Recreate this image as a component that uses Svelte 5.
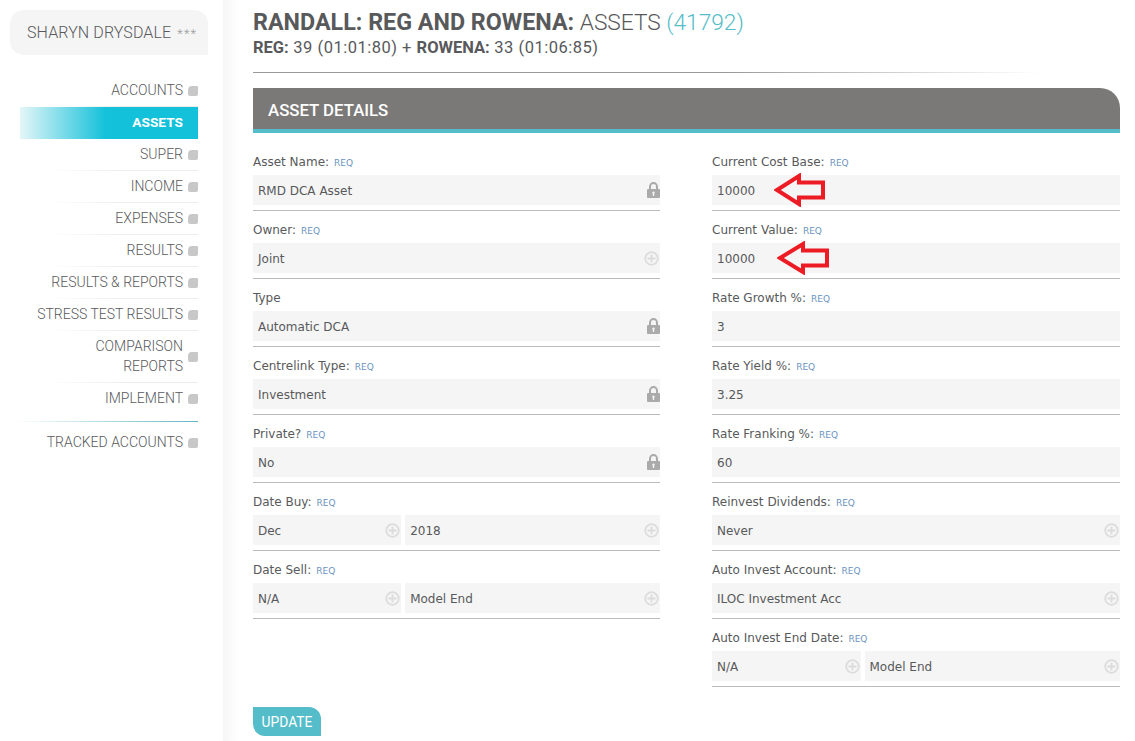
<script>
	const nav = [
		{ label: 'ACCOUNTS' },
		{ label: 'ASSETS', active: true },
		{ label: 'SUPER' },
		{ label: 'INCOME' },
		{ label: 'EXPENSES' },
		{ label: 'RESULTS' },
		{ label: 'RESULTS & REPORTS' },
		{ label: 'STRESS TEST RESULTS' },
		{ label: 'COMPARISON REPORTS', wrap: true },
		{ label: 'IMPLEMENT', last: true }
	];

	const left = [
		{ label: 'Asset Name:', req: true, parts: [{ value: 'RMD DCA Asset', icon: 'lock' }] },
		{ label: 'Owner:', req: true, parts: [{ value: 'Joint', icon: 'plus' }] },
		{ label: 'Type', parts: [{ value: 'Automatic DCA', icon: 'lock' }] },
		{ label: 'Centrelink Type:', req: true, parts: [{ value: 'Investment', icon: 'lock' }] },
		{ label: 'Private?', req: true, parts: [{ value: 'No', icon: 'lock' }] },
		{ label: 'Date Buy:', req: true, parts: [{ value: 'Dec', icon: 'plus' }, { value: '2018', icon: 'plus' }] },
		{ label: 'Date Sell:', req: true, parts: [{ value: 'N/A', icon: 'plus' }, { value: 'Model End', icon: 'plus' }] }
	];

	const right = [
		{ label: 'Current Cost Base:', req: true, parts: [{ value: '10000' }] },
		{ label: 'Current Value:', req: true, parts: [{ value: '10000' }] },
		{ label: 'Rate Growth %:', req: true, parts: [{ value: '3' }] },
		{ label: 'Rate Yield %:', req: true, parts: [{ value: '3.25' }] },
		{ label: 'Rate Franking %:', req: true, parts: [{ value: '60' }] },
		{ label: 'Reinvest Dividends:', req: true, parts: [{ value: 'Never', icon: 'plus' }] },
		{ label: 'Auto Invest Account:', req: true, parts: [{ value: 'ILOC Investment Acc', icon: 'plus' }] },
		{ label: 'Auto Invest End Date:', req: true, parts: [{ value: 'N/A', icon: 'plus' }, { value: 'Model End', icon: 'plus' }] }
	];
</script>

{#snippet column(rows)}
	<div class="column">
		{#each rows as row}
			<div class="row">
				<div class="label">{row.label}{#if row.req}<span class="req">REQ</span>{/if}</div>
				<div class="inputs">
					{#each row.parts as part}
						<div class="input">
							<span>{part.value}</span>
							{#if part.icon === 'lock'}
								<svg class="lock" width="13" height="16" viewBox="0 0 13 16">
									<path d="M3 7V4.600a3.500 3.500 0 0 1 7 0V7" fill="none" stroke="#aaa" stroke-width="2" />
									<path fill-rule="evenodd" d="M1 7h11a1 1 0 0 1 1 1v7a1 1 0 0 1-1 1H1a1 1 0 0 1-1-1V8a1 1 0 0 1 1-1zM6.500 9.500a1.200 1.200 0 0 0-.7 2.200V14h1.400v-2.300a1.200 1.200 0 0 0-.7-2.200z" fill="#aaa" />
								</svg>
							{:else if part.icon === 'plus'}
								<svg class="plus" width="15" height="15" viewBox="0 0 15 15">
									<circle cx="7.500" cy="7.500" r="6.300" fill="none" stroke="#dcdcdc" stroke-width="1.800" />
									<path d="M7.500 3.500v8M3.500 7.500h8" stroke="#dcdcdc" stroke-width="1.800" />
								</svg>
							{/if}
						</div>
					{/each}
				</div>
			</div>
		{/each}
	</div>
{/snippet}

<div class="page">
	<aside class="sidebar">
		<div class="client">SHARYN DRYSDALE <span class="stars">***</span></div>
		<nav>
			{#each nav as item}
				<div class="nav-item" class:active={item.active} class:last={item.last}>
					<span class="nav-label" class:wrap={item.wrap}>{item.label}</span>
					{#if !item.active}<i class="dot"></i>{/if}
				</div>
			{/each}
			<div class="nav-rule"></div>
			<div class="nav-item last">
				<span class="nav-label">TRACKED ACCOUNTS</span>
				<i class="dot"></i>
			</div>
		</nav>
	</aside>
	<div class="gutter"></div>
	<main>
		<h1><b>RANDALL: REG AND ROWENA:</b> ASSETS <span class="code">(41792)</span></h1>
		<h2><b>REG:</b> 39 (01:01:80) + <b>ROWENA:</b> 33 (01:06:85)</h2>
		<div class="rule"></div>
		<h3>ASSET DETAILS</h3>
		<div class="columns">
			{@render column(left)}
			{@render column(right)}
		</div>
		<button>UPDATE</button>

		<svg class="arrow one" width="56" height="34" viewBox="0 0 56 34">
			<path d="M3 17 L25 3 V9.500 H49 V24.500 H25 V31 Z" fill="none" stroke="#ed1c24" stroke-width="4" />
		</svg>
		<svg class="arrow two" width="56" height="34" viewBox="0 0 56 34">
			<path d="M3 17 L26 3 V9.500 H50 V24.500 H26 V31 Z" fill="none" stroke="#ed1c24" stroke-width="4" />
		</svg>
	</main>
</div>

<style>
	:global(body) {
		margin: 0;
		background: #fff;
	}

	.page {
		display: flex;
		height: 741px;
		overflow: hidden;
		color: #58595b;
	}

	.sidebar {
		box-sizing: border-box;
		width: 223px;
		flex: none;
		padding: 10px 15px 0 10px;
		font-family: Roboto, sans-serif;
	}

	.client {
		box-sizing: border-box;
		height: 45px;
		padding-left: 17px;
		line-height: 45px;
		font-size: 16px;
		font-weight: 300;
		letter-spacing: 0.1px;
		white-space: nowrap;
		background: #f5f5f5;
		border-radius: 14px 14px 0 14px;
	}

	.stars {
		margin-left: 2px;
		font-size: 13px;
		letter-spacing: 1.2px;
		color: #999;
	}

	nav {
		margin: 20px 0 0 10px;
		width: 178px;
	}

	.nav-item {
		box-sizing: border-box;
		display: flex;
		align-items: center;
		justify-content: flex-end;
		min-height: 32px;
		padding: 0 0 1px;
		border-bottom: 1px solid;
		border-image: linear-gradient(to right, #fff 15%, #ececec 60%) 1;
		font-size: 14px;
		font-weight: 300;
	}

	.nav-item.last {
		padding-bottom: 2px;
		border-bottom: 0;
	}

	.nav-label {
		text-align: right;
	}

	.nav-label.wrap {
		width: 110px;
		line-height: 20px;
		padding: 5px 0;
	}

	.nav-item.active {
		border: 0;
		padding: 0 15px 2px 0;
		color: #fff;
		background: linear-gradient(to right, #e4f6f8 0%, #14c1da 48%);
	}

	.nav-item.active .nav-label {
		font-weight: 700;
		font-size: 13.7px;
	}

	.dot {
		width: 10px;
		height: 10px;
		margin: 2px 0 0 5px;
		background: #c8c8c8;
		border-radius: 4px 1px 2px 2px;
	}

	.nav-rule {
		height: 1px;
		margin: 6px 0 5px -5px;
		background: linear-gradient(to right, #fff, #5fb7c4);
	}

	.gutter {
		width: 17px;
		flex: none;
		background: linear-gradient(to right, #f7f6f7, #fff);
	}

	main {
		position: relative;
		box-sizing: border-box;
		width: 880px;
		padding: 0 0 0 13px;
		font-family: "DejaVu Sans", sans-serif;
	}

	h1,
	h2,
	h3 {
		margin: 0;
		font-family: Roboto, sans-serif;
		font-weight: 300;
	}

	h1 {
		margin-top: 8px;
		font-size: 22.7px;
		line-height: 29px;
	}

	h1 b {
		font-size: 23.3px;
		font-weight: 700;
	}

	h2 b {
		font-weight: 700;
		letter-spacing: 0;
	}

	.code {
		color: #55bcc9;
	}

	h2 {
		position: relative;
		top: 1px;
		font-size: 16.5px;
		line-height: 20px;
		font-weight: 400;
		letter-spacing: 0.5px;
	}

	.rule {
		height: 1px;
		margin: 15px 80px 15px 0;
		background: linear-gradient(to right, #999 60%, #fff);
	}

	h3 {
		box-sizing: border-box;
		height: 45px;
		padding-left: 15px;
		line-height: 44px;
		font-size: 16.8px;
		font-weight: 500;
		color: #fff;
		background: #7a7978;
		border-bottom: 4px solid #55bcc9;
		border-top-right-radius: 20px;
	}

	.columns {
		display: grid;
		grid-template-columns: 407px 408px;
		column-gap: 52px;
		margin-top: 15px;
	}

	.row {
		height: 68px;
	}

	.label {
		height: 27px;
		line-height: 29px;
		font-size: 12px;
		color: #58595b;
		white-space: nowrap;
	}

	.req {
		margin-left: 5px;
		font-size: 9px;
		color: #6a93c0;
	}

	.inputs {
		display: flex;
		gap: 4px;
		height: 35px;
		border-bottom: 1px solid #bbb;
	}

	.input {
		box-sizing: border-box;
		display: flex;
		flex: 1 1 0;
		align-items: center;
		justify-content: space-between;
		height: 30px;
		padding: 0 1px 0 5px;
		font-size: 12px;
		background: #f5f5f5;
	}

	.input span {
		padding-top: 2px;
	}

	.input:first-child:not(:last-child) {
		flex: 0 0 36.4%;
	}

	.lock {
		margin-right: -1px;
	}

	button {
		display: block;
		width: 68px;
		height: 29px;
		margin-top: 15px;
		padding: 0;
		border: 0;
		font-family: Roboto, sans-serif;
		font-size: 13.8px;
		font-weight: 400;
		color: #fff;
		background: #55bcc9;
		border-radius: 0 12px 0 12px;
	}

	.arrow {
		position: absolute;
	}

	.arrow.one {
		left: 534px;
		top: 173px;
	}

	.arrow.two {
		left: 537px;
		top: 241px;
	}
</style>
